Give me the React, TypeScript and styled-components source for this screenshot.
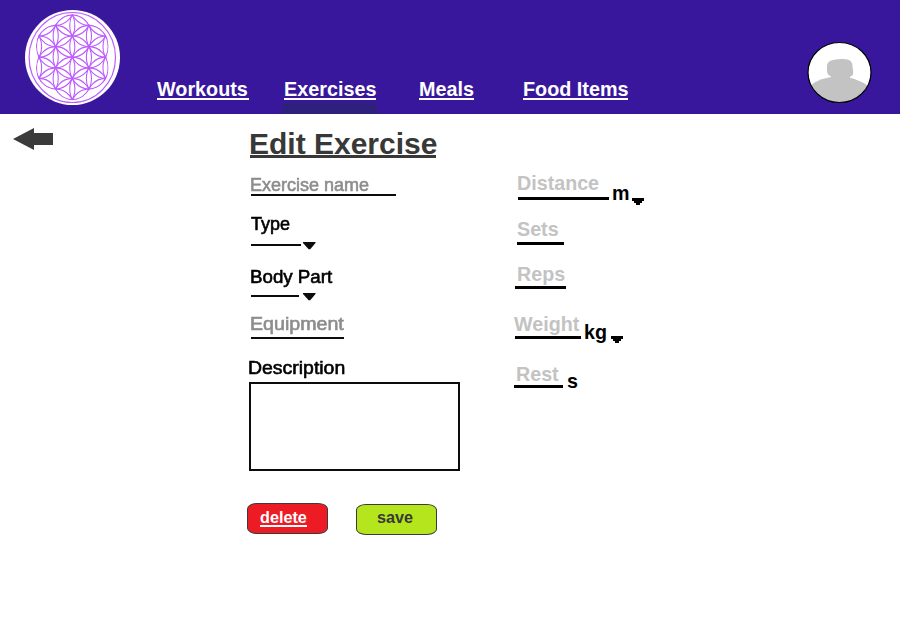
import React from 'react';
import styled, { createGlobalStyle } from 'styled-components';

const GlobalStyle = createGlobalStyle`
  *, *::before, *::after { box-sizing: border-box; }
  body {
    margin: 0;
    background: #fff;
    font-family: 'Liberation Sans', Arial, sans-serif;
    overflow: hidden;
  }
`;

const Page = styled.div`
  height: 626px;
  width: 900px;
`;

const Header = styled.header`
  display: flex;
  align-items: flex-start;
  height: 114px;
  padding-left: 24px;
  background: #39179c;
`;

const LogoArt = styled.svg`
  display: block;
  flex: none;
  width: 96px;
  height: 96px;
  margin-top: 9px;
`;

const Nav = styled.nav`
  display: flex;
  flex: 1;
  padding: 79px 0 0 37px;
`;

const NavLink = styled.a<{ $width: number; $gap: number; $active?: boolean }>`
  position: relative;
  flex: none;
  width: ${(p) => p.$width}px;
  height: 21px;
  margin-right: ${(p) => p.$gap}px;
  border-bottom: 2px solid #fff;
  color: #fff;
  font-size: 19.8px;
  font-weight: 700;
  line-height: 20px;
  white-space: nowrap;

  &::before {
    content: '';
    display: ${(p) => (p.$active ? 'block' : 'none')};
    position: absolute;
    top: 24px;
    left: -2px;
    width: 95px;
    height: 11px;
    background: #2e217d;
  }
`;

const AvatarArt = styled.svg`
  display: block;
  flex: none;
  width: 66px;
  height: 63px;
  margin: 41px 27px 0 0;
`;

const Main = styled.main`
  display: flex;
  align-items: flex-start;
`;

const BackButton = styled.button`
  flex: none;
  width: 41px;
  height: 22px;
  margin: 14px 0 0 13px;
  padding: 0;
  border: 0;
  background: none;

  svg { display: block; }
`;

const LeftColumn = styled.section`
  flex: none;
  width: 264px;
  margin-left: 193px;
  padding: 15px 0 0 3px;
`;

const RightColumn = styled.section`
  flex: none;
  width: 160px;
  padding-top: 59px;
`;

const Title = styled.h1`
  width: 186px;
  height: 29px;
  margin: 0;
  border-bottom: 3px solid #383838;
  color: #383838;
  font-size: 30px;
  line-height: 29px;
  text-indent: -1px;
  white-space: nowrap;
`;

const SoftField = styled.div<{ $height: number; $top: number }>`
  height: ${(p) => p.$height}px;
  margin-top: ${(p) => p.$top}px;
`;

const SoftLabel = styled.label<{ $muted?: boolean; $stretch?: number; $shift?: number; $gap: number }>`
  display: block;
  width: max-content;
  height: ${(p) => 15 + p.$gap}px;
  margin-left: ${(p) => p.$shift ?? 0}px;
  color: ${(p) => (p.$muted ? '#8d8d8d' : '#000')};
  font-size: 18px;
  line-height: 18px;
  white-space: nowrap;
  transform: scaleX(${(p) => p.$stretch ?? 1});
  transform-origin: left top;
  -webkit-text-stroke: 0.6px currentColor;
  filter: blur(0.4px);
`;

const SoftLine = styled.div<{ $width: number }>`
  width: ${(p) => p.$width}px;
  height: 2px;
  margin-left: 1px;
  background: #0c0c0c;
`;

const Picker = styled.div<{ $gap: number }>`
  display: flex;
  gap: ${(p) => p.$gap}px;
  height: 6px;

  svg { display: block; margin-top: -2px; }
`;

const DescriptionBox = styled.div`
  width: 211px;
  height: 89px;
  margin-left: -1px;
  border: 2px solid #0c0c0c;
`;

const Actions = styled.div`
  display: flex;
  align-items: flex-start;
  gap: 28px;
  margin: 32px 0 0 -3px;
`;

const ActionButton = styled.button<{ $kind: 'delete' | 'save' }>`
  display: flex;
  flex: none;
  width: 81px;
  height: 31px;
  margin-top: ${(p) => (p.$kind === 'save' ? 1 : 0)}px;
  padding: ${(p) => (p.$kind === 'save' ? '4px 0 0 20px' : '5px 0 0 12px')};
  border: 1px solid #3b3b3b;
  border-radius: 10px / 6px;
  background: ${(p) => (p.$kind === 'save' ? '#b5e61d' : '#ed1c24')};
  color: ${(p) => (p.$kind === 'save' ? '#383838' : '#fff')};
  font: 700 16.2px/16px 'Liberation Sans', Arial, sans-serif;
`;

const DeleteText = styled.span`
  height: 18px;
  border-bottom: 2px solid #fff;
`;

const Metric = styled.div<{ $height: number }>`
  display: flex;
  align-items: flex-start;
  height: ${(p) => p.$height}px;
`;

const MetricInput = styled.div<{ $left: number; $width: number; $height: number; $indent: number }>`
  flex: none;
  width: ${(p) => p.$width}px;
  height: ${(p) => p.$height}px;
  margin-left: ${(p) => p.$left}px;
  border-bottom: 3px solid #000;
  color: #c3c3c3;
  font-size: 19.7px;
  font-weight: 700;
  line-height: 20px;
  text-indent: ${(p) => p.$indent}px;
  white-space: nowrap;
`;

const Unit = styled.span<{ $top: number; $left: number; $width: number }>`
  flex: none;
  width: ${(p) => p.$width}px;
  margin: ${(p) => p.$top}px 0 0 ${(p) => p.$left}px;
  color: #000;
  font-size: 19.7px;
  font-weight: 700;
  line-height: 20px;
`;

const UnitCaret = styled.svg<{ $top: number }>`
  display: block;
  flex: none;
  margin-top: ${(p) => p.$top}px;
`;

const R = 21.2;

// Centres of a hexagonal lattice, up to the given number of rings.
function lattice(rings: number): Array<[number, number]> {
  const points: Array<[number, number]> = [];
  for (let q = -rings; q <= rings; q += 1) {
    for (let r = -rings; r <= rings; r += 1) {
      if (Math.abs(q + r) <= rings) points.push([q * R * 0.866, (r + q / 2) * R]);
    }
  }
  return points;
}

function Circles({ rings, radius }: { rings: number; radius: number }) {
  return lattice(rings).map(([x, y]) => <circle key={`${x},${y}`} cx={x} cy={y} r={radius} />);
}

function Logo() {
  return (
    <LogoArt viewBox="0 0 96 96" aria-label="Flower of life">
      <defs>
        <clipPath id="flower">
          {Circles({ rings: 1, radius: R + 0.6 })}
        </clipPath>
      </defs>
      <circle cx="48.5" cy="48.5" r="47.5" fill="#fff" />
      <g fill="none" stroke="#bd5cff">
        <ellipse cx="48.3" cy="48.5" rx="43.2" ry="45" strokeWidth="1.2" />
        <g transform="translate(48.3 48.2) scale(.905 1)" strokeWidth="1.2">
          <g clipPath="url(#flower)">
            <Circles rings={3} radius={R} />
          </g>
        </g>
      </g>
    </LogoArt>
  );
}

function Avatar() {
  return (
    <AvatarArt viewBox="0 0 66 63" aria-label="Profile">
      <defs>
        <clipPath id="avatar">
          <ellipse cx="32.5" cy="31.5" rx="31.5" ry="30" />
        </clipPath>
      </defs>
      <ellipse cx="32.5" cy="31.5" rx="31.5" ry="30" fill="#fff" />
      <g clipPath="url(#avatar)" fill="#c3c3c3">
        <path d="M24 19.5Q28 18 34 18Q42 17.5 44 20.5Q45.5 22 45.5 26Q47 31 45.5 34.5Q42 35.5 43 38H24V35.5Q20 33.5 20 30V25Q20 21 24 19.5Z" />
        <path d="M0 47Q12 35.5 32 35.5Q50 35.5 64 47V63H0Z" />
      </g>
      <ellipse cx="32.5" cy="31.5" rx="31.5" ry="30" fill="none" stroke="#000" strokeWidth="1.2" />
    </AvatarArt>
  );
}

function SoftCaret() {
  return (
    <svg width="13" height="8" viewBox="0 0 13 8">
      <path d="M0 0H12.5V1L7.2 7.2H5.6L0 1Z" fill="#0c0c0c" />
    </svg>
  );
}

function Caret({ top }: { top: number }) {
  return (
    <UnitCaret $top={top} width="12" height="7" viewBox="0 0 12 7" shapeRendering="crispEdges">
      <path d="M0 0H12V3H10V5H8V7H4V5H2V3H0Z" />
    </UnitCaret>
  );
}

export default function App() {
  return (
    <Page>
      <GlobalStyle />
      <Header>
        <Logo />
        <Nav>
          <NavLink $width={92} $gap={35}>Workouts</NavLink>
          <NavLink $width={92} $gap={43} $active>Exercises</NavLink>
          <NavLink $width={55} $gap={49}>Meals</NavLink>
          <NavLink $width={105} $gap={0}>Food Items</NavLink>
        </Nav>
        <Avatar />
      </Header>
      <Main>
        <BackButton aria-label="Back">
          <svg width="41" height="22" viewBox="0 0 41 22">
            <path d="M0 11L21 0V5H40V17H21V22Z" fill="#3b3b3b" />
          </svg>
        </BackButton>
        <LeftColumn>
          <Title>Edit Exercise</Title>
          <SoftField $top={18} $height={21}>
            <SoftLabel $muted $gap={3}>Exercise name</SoftLabel>
            <SoftLine $width={145} />
          </SoftField>
          <SoftField $top={18} $height={36}>
            <SoftLabel $gap={14} $shift={1}>Type</SoftLabel>
            <Picker $gap={2}>
              <SoftLine $width={50} />
              <SoftCaret />
            </Picker>
          </SoftField>
          <SoftField $top={17} $height={34}>
            <SoftLabel $gap={12} $shift={-0.5} $stretch={1.04}>Body Part</SoftLabel>
            <Picker $gap={4}>
              <SoftLine $width={48} />
              <SoftCaret />
            </Picker>
          </SoftField>
          <SoftField $top={13} $height={24}>
            <SoftLabel $muted $gap={7} $stretch={1.09}>Equipment</SoftLabel>
            <SoftLine $width={93} />
          </SoftField>
          <SoftField $top={20} $height={112}>
            <SoftLabel $gap={8} $shift={-2} $stretch={1.08}>Description</SoftLabel>
            <DescriptionBox />
          </SoftField>
          <Actions>
            <ActionButton $kind="delete"><DeleteText>delete</DeleteText></ActionButton>
            <ActionButton $kind="save">save</ActionButton>
          </Actions>
        </LeftColumn>
        <RightColumn>
          <Metric $height={46}>
            <MetricInput $left={7} $width={91} $height={27} $indent={-1}>Distance</MetricInput>
            <Unit $top={10} $left={3} $width={20}>m</Unit>
            <Caret top={25} />
          </Metric>
          <Metric $height={45}>
            <MetricInput $left={6} $width={47} $height={26} $indent={0}>Sets</MetricInput>
          </Metric>
          <Metric $height={50}>
            <MetricInput $left={4} $width={51} $height={25} $indent={2}>Reps</MetricInput>
          </Metric>
          <Metric $height={50}>
            <MetricInput $left={4} $width={66} $height={25} $indent={-1}>Weight</MetricInput>
            <Unit $top={8} $left={3} $width={27}>kg</Unit>
            <Caret top={22} />
          </Metric>
          <Metric $height={30}>
            <MetricInput $left={3} $width={49} $height={24} $indent={2}>Rest</MetricInput>
            <Unit $top={7} $left={4} $width={12}>s</Unit>
          </Metric>
        </RightColumn>
      </Main>
    </Page>
  );
}
